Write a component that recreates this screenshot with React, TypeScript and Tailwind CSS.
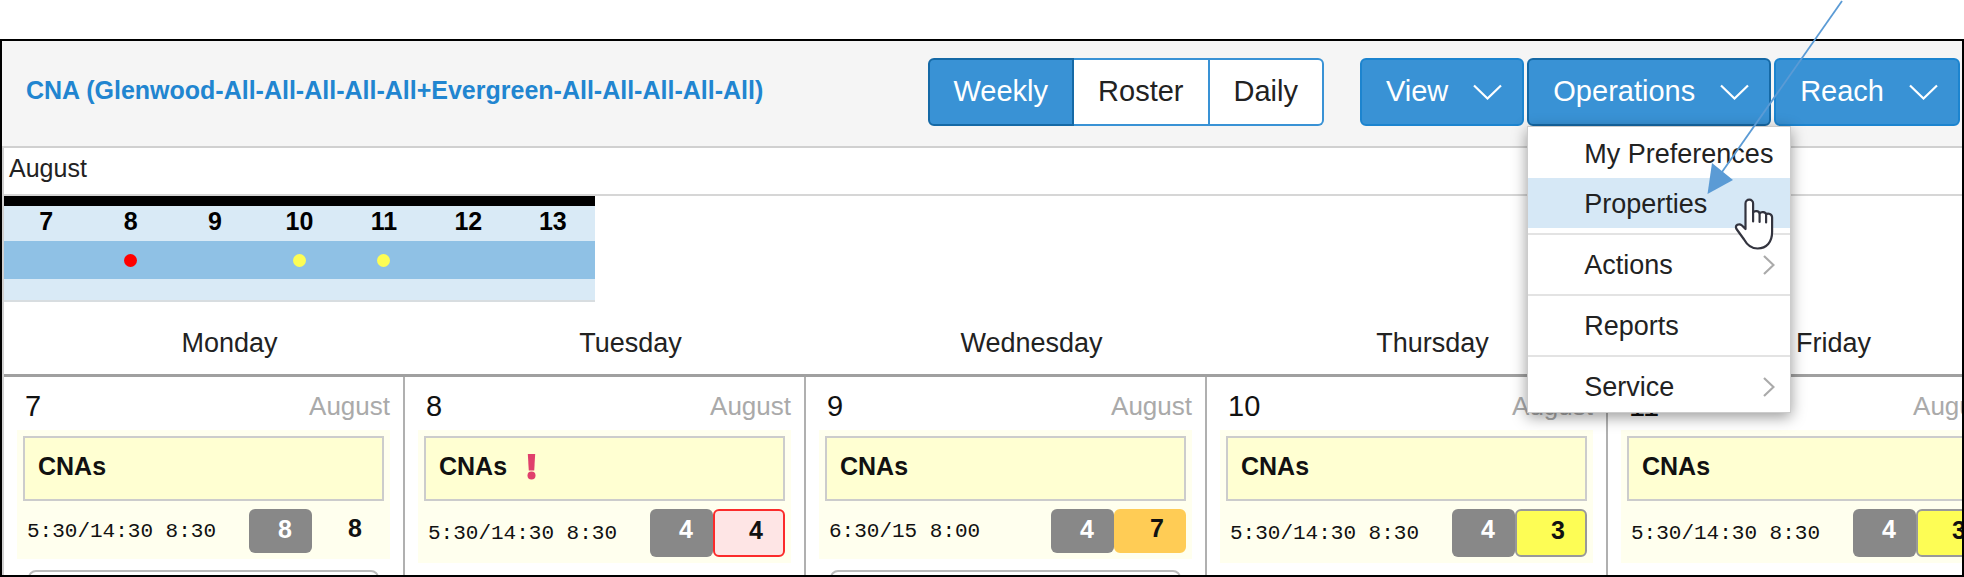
import React from "react";

type Tone = "plain" | "over" | "warn" | "short";

interface Day {
  name: string;
  date: number;
  shift: string;
  need: number;
  have: number;
  tone: Tone;
  alert?: boolean;
  more?: boolean;
}

const DAYS: Day[] = [
  { name: "Monday", date: 7, shift: "5:30/14:30 8:30", need: 8, have: 8, tone: "plain", more: true },
  { name: "Tuesday", date: 8, shift: "5:30/14:30 8:30", need: 4, have: 4, tone: "short", alert: true },
  { name: "Wednesday", date: 9, shift: "6:30/15 8:00", need: 4, have: 7, tone: "over", more: true },
  { name: "Thursday", date: 10, shift: "5:30/14:30 8:30", need: 4, have: 3, tone: "warn" },
  { name: "Friday", date: 11, shift: "5:30/14:30 8:30", need: 4, have: 3, tone: "warn" },
];

const STRIP: { date: number; dot?: string }[] = [
  { date: 7 },
  { date: 8, dot: "bg-[#ff0000]" },
  { date: 9 },
  { date: 10, dot: "bg-[#fdfd55]" },
  { date: 11, dot: "bg-[#fdfd55]" },
  { date: 12 },
  { date: 13 },
];

const TONES: Record<Tone, string> = {
  plain: "border-transparent h-11",
  over: "border-[#ffcc55] bg-[#ffcc55] h-11",
  warn: "border-[#999999] bg-[#fdfd55] h-12",
  short: "border-[#fb2b2b] bg-[#fee5e5] h-12",
};

function ChevronDown() {
  return (
    <svg className="h-4 w-[29px] shrink-0" viewBox="0 0 29 16" fill="none" stroke="currentColor" strokeWidth="2.2" aria-hidden="true">
      <path d="M1 1.5 14.5 14.5 28 1.5" />
    </svg>
  );
}

function ChevronRight() {
  return (
    <svg className="h-5 w-3 shrink-0 text-[#aaaaaa]" viewBox="0 0 12 20" fill="none" stroke="currentColor" strokeWidth="2.2" aria-hidden="true">
      <path d="M1 1 10.5 10 1 19" />
    </svg>
  );
}

function MenuButton({ label, active }: { label: string; active?: boolean }) {
  return (
    <button
      type="button"
      className={`flex h-[68px] items-center gap-[25px] rounded-md border-2 bg-[#3992d5] pr-5 pl-6 text-[29px] text-white ${
        active ? "border-[#1569a6]" : "border-[#1c84cf]"
      }`}
    >
      {label}
      <ChevronDown />
    </button>
  );
}

function MenuItem({ label, sub, active }: { label: string; sub?: boolean; active?: boolean }) {
  return (
    <button
      type="button"
      role="menuitem"
      className={`flex h-[50px] w-full items-center justify-between pt-0.5 pr-[15px] pl-14 text-[27px] whitespace-nowrap text-[#222222] ${
        active ? "bg-[#d6e8f6]" : ""
      }`}
    >
      {label}
      {sub && <ChevronRight />}
    </button>
  );
}

function Separator() {
  return <div role="separator" className="mt-[5px] mb-1 h-0.5 bg-[#e3e3e3]" />;
}

function OperationsMenu() {
  return (
    <div role="menu" className="absolute top-full left-0 z-10 w-[264px] border border-[#cccccc] bg-white py-px shadow-[0_4px_14px_rgba(0,0,0,0.4)]">
      <MenuItem label="My Preferences" />
      <MenuItem label="Properties" active />
      <Separator />
      <MenuItem label="Actions" sub />
      <Separator />
      <MenuItem label="Reports" />
      <Separator />
      <MenuItem label="Service" sub />
      <svg className="absolute top-[71px] left-[206px] h-[52px] w-[41px]" viewBox="0 0 41 52" fill="#ffffff" stroke="#33343f" strokeWidth="2.2" strokeLinejoin="round" strokeLinecap="round" aria-hidden="true">
        <path d="M11.5 31V5.500a3.800 3.800 0 0 1 7.600 0V14.500c1-2 6-2 6.500.8 1.500-1.800 6-1.500 6.500 1 2-1.300 6-.3 6 3.200V34c0 10-5.500 16.500-14.500 16.500-7 0-10.500-3.500-13.500-9L2.500 31c-2-4 2.500-6 5.500-3.500Z" />
        <path d="M19.100 14.500v9M25.600 15.500V24M32.100 17v7.500" />
      </svg>
      <svg className="pointer-events-none absolute -top-[127px] left-[178px] h-[196px] w-[140px]" viewBox="0 0 140 196" aria-hidden="true">
        <path d="M136 1 16 172" stroke="#5b9bd5" strokeWidth="1.800" />
        <path d="M1.500 194 6 163 27 180Z" fill="#5b9bd5" />
      </svg>
    </div>
  );
}

function DayCell({ day }: { day: Day }) {
  return (
    <div className="border-r-2 border-[#b0b0b0] px-[13px]">
      <div className="flex h-[53px] items-center justify-between pt-1.5">
        <span className="pl-2 text-[29px] text-[#111111]">{day.date}</span>
        <span className="text-[26px] text-[#aaaaaa]">August</span>
      </div>
      <div className="bg-[#ffffee] p-1.5">
        <div className="flex h-[65px] items-center gap-5 border-2 border-[#cccccc] bg-[#ffffd2] px-[13px] pb-1 text-[25px] font-bold text-[#111111]">
          CNAs
          {day.alert && (
            <svg className="h-[26px] w-[9px]" viewBox="0 0 9 26" fill="#e0406c" role="img" aria-label="Alert">
              <path d="M.8 0H8.200L7.200 16.500H1.800Z" />
              <circle cx="4.500" cy="21.500" r="4" />
            </svg>
          )}
        </div>
        <div className="mt-2 flex items-stretch justify-between">
          <span className="flex items-center pt-0.5 pl-1 font-['Liberation_Mono',monospace] text-[21px] text-[#111111]">{day.shift}</span>
          <div className="flex text-[25px] font-bold">
            <span className="flex w-[63px] justify-end rounded-md bg-[#888888] pt-0.5 pr-5 text-white">{day.need}</span>
            <span className={`flex w-[72px] items-center justify-end rounded-md border-2 pr-5 pb-1 text-[#111111] ${TONES[day.tone]}`}>
              {day.have}
            </span>
          </div>
        </div>
      </div>
      {day.more && <div className="mx-[11px] mt-[11px] h-8 rounded-lg border-2 border-[#bbbbbb]" />}
    </div>
  );
}

export default function App() {
  return (
    <div className="flex h-screen flex-col bg-white pt-[39px] font-['Liberation_Sans',Arial,sans-serif]">
      <div className="flex min-h-0 flex-1 flex-col border-2 border-black">
        <header className="flex items-start border-b-2 border-[#d0d0d0] bg-[#f5f5f5] pt-[17px] pr-0.5 pb-5 pl-6">
          <h1 className="flex h-[66px] flex-1 items-center text-[25px] font-bold whitespace-nowrap text-[#2185d0]">
            CNA (Glenwood-All-All-All-All-All+Evergreen-All-All-All-All-All)
          </h1>
          <div className="mr-9 flex h-[68px] text-[29px]">
            <button type="button" className="rounded-l-md border-2 border-[#1569a6] bg-[#3992d5] px-6 text-white">
              Weekly
            </button>
            <button type="button" className="border-y-2 border-r-2 border-[#3992d5] bg-white px-6 text-[#222222]">
              Roster
            </button>
            <button type="button" className="rounded-r-md border-y-2 border-r-2 border-[#3992d5] bg-white px-6 text-[#222222]">
              Daily
            </button>
          </div>
          <nav className="flex gap-[3px]">
            <MenuButton label="View" />
            <div className="relative">
              <MenuButton label="Operations" active />
              <OperationsMenu />
            </div>
            <MenuButton label="Reach" />
          </nav>
        </header>

        <main className="min-h-0 flex-1 overflow-hidden border-l-2 border-[#d0d0d0]">
          <div className="flex h-12 items-center border-b-2 border-[#d6d6d6] pb-1 pl-[5px] text-[25px] text-[#222222]">August</div>
          <div className="grid w-[591px] grid-cols-7 border-t-[10px] border-b-2 border-t-black border-b-[#d8dde0] bg-[#d9eaf6]">
            {STRIP.map((d) => (
              <div key={d.date} className="pb-[21px] text-center">
                <div className="h-[35px] text-[25px] leading-[30px] font-bold text-black">{d.date}</div>
                <div className="flex h-[38px] items-center justify-center bg-[#8fc1e5]">
                  {d.dot && <span className={`size-[13px] rounded-full ${d.dot}`} />}
                </div>
              </div>
            ))}
          </div>
          <div className="grid grid-cols-[repeat(5,minmax(401px,1fr))] border-b-[3px] border-[#a0a0a0]">
            {DAYS.map((d) => (
              <div key={d.name} className="flex h-[72px] items-center justify-center pt-2.5 pl-[50px] text-[27px] text-[#222222]">
                {d.name}
              </div>
            ))}
          </div>
          <div className="grid h-[400px] grid-cols-[repeat(5,minmax(401px,1fr))]">
            {DAYS.map((d) => (
              <DayCell key={d.name} day={d} />
            ))}
          </div>
        </main>
      </div>
    </div>
  );
}
